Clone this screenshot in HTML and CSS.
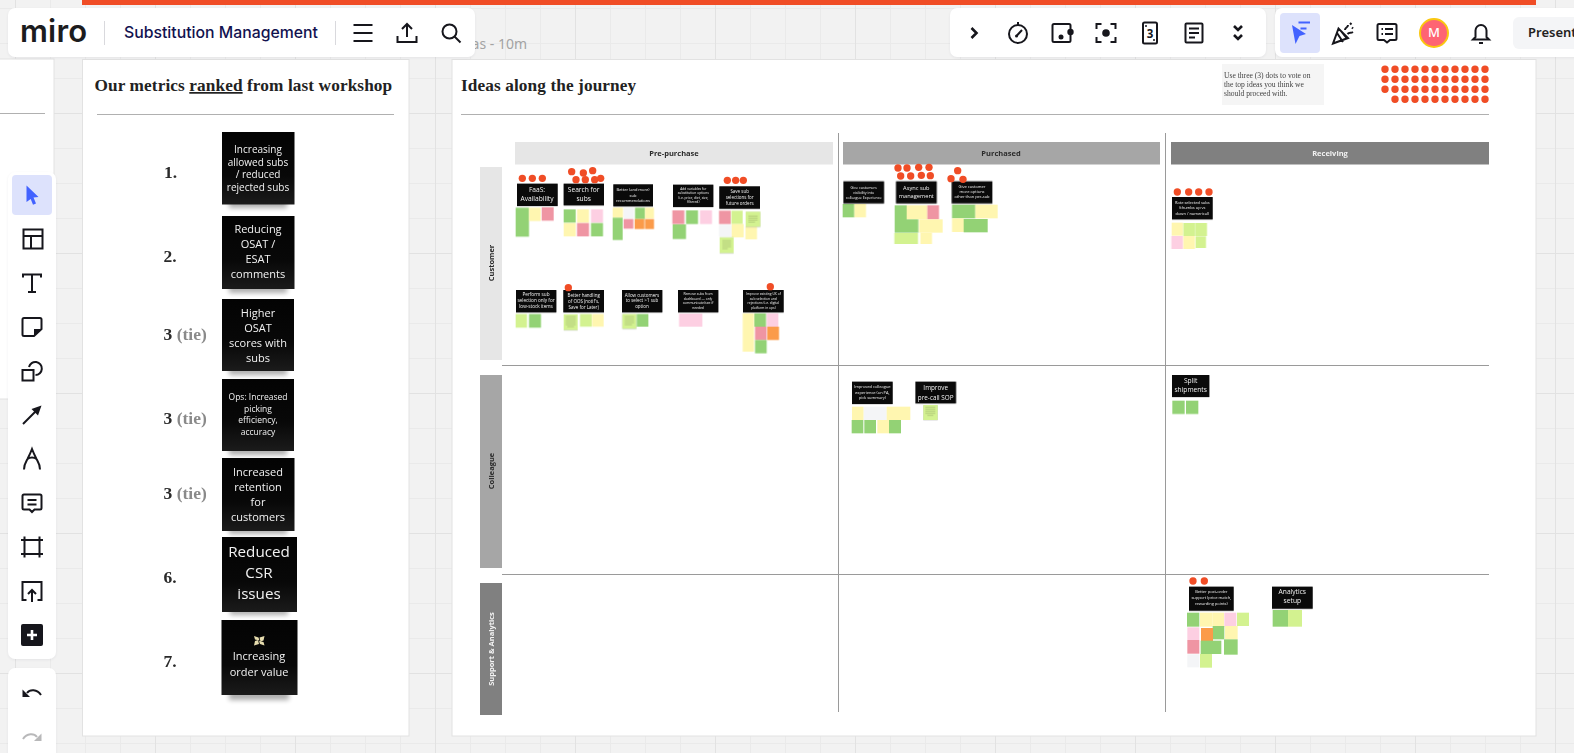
FILE: index.html
```html
<!DOCTYPE html>
<html lang="en">
<head>
<meta charset="utf-8">
<title>Substitution Management - Miro</title>
<link rel="stylesheet" href="styles.css">
</head>
<body>
<svg class="board" width="1574" height="753" viewBox="0 0 1574 753">
  <defs>
    <linearGradient id="noteg" x1="0" y1="0" x2="0" y2="1">
      <stop offset="0" stop-color="#030303"/>
      <stop offset=".6" stop-color="#080808"/>
      <stop offset="1" stop-color="#1b1b1b"/>
    </linearGradient>
  </defs>
  <text class="behind" x="527" y="48.500" text-anchor="end">Ideas - 10m</text>
  <rect class="banner" x="82" y="0" width="1454" height="5"/>
  <rect class="frame" x="-10" y="59" width="64" height="340"/>
  <rect class="frame" x="82.500" y="59.500" width="326.500" height="676.500"/>
  <rect class="frame" x="452" y="59.500" width="1084" height="676.500"/>
  <path class="rule" d="M0 113.500H45M97 114.500H394M461 114.500H1489"/>

  <text class="heading" x="94.500" y="91">Our metrics <tspan class="under">ranked</tspan> from last workshop</text>
  <text class="heading" x="461" y="91">Ideas along the journey</text>

  <!-- metrics column -->
  <g class="soft">
    <text class="rank" x="164" y="178">1.</text>
    <text class="rank" x="163.500" y="262">2.</text>
    <text class="rank" x="163.500" y="340">3 <tspan class="tie">(tie)</tspan></text>
    <text class="rank" x="163.500" y="424">3 <tspan class="tie">(tie)</tspan></text>
    <text class="rank" x="163.500" y="499">3 <tspan class="tie">(tie)</tspan></text>
    <text class="rank" x="163.500" y="583">6.</text>
    <text class="rank" x="163.500" y="667">7.</text>

    <rect class="nshadow" x="229" y="200" width="58" height="8"/>
    <rect class="nshadow" x="229" y="285" width="58" height="8"/>
    <rect class="nshadow" x="229" y="367" width="58" height="8"/>
    <rect class="nshadow" x="229" y="447" width="58" height="8"/>
    <rect class="nshadow" x="229" y="527" width="58" height="7"/>
    <rect class="nshadow" x="230" y="608" width="58" height="7"/>
    <rect class="nshadow" x="229" y="691" width="60" height="9"/>

    <rect fill="url(#noteg)" x="222" y="132" width="72.500" height="72.500"/>
    <rect fill="url(#noteg)" x="222" y="216" width="72.500" height="73"/>
    <rect fill="url(#noteg)" x="222" y="299" width="72" height="72"/>
    <rect fill="url(#noteg)" x="222" y="379" width="72" height="72"/>
    <rect fill="url(#noteg)" x="222" y="458" width="72.500" height="73"/>
    <rect fill="url(#noteg)" x="222" y="537" width="75" height="75"/>
    <rect fill="url(#noteg)" x="221.500" y="620" width="76" height="75"/>

    <text class="nw s10" x="258" y="153">Increasing<tspan x="258" dy="12.7">allowed subs</tspan><tspan x="258" dy="12.7">/ reduced</tspan><tspan x="258" dy="12.7">rejected subs</tspan></text>
    <text class="nw s11" x="258" y="233">Reducing<tspan x="258" dy="15">OSAT /</tspan><tspan x="258" dy="15">ESAT</tspan><tspan x="258" dy="15">comments</tspan></text>
    <text class="nw s11" x="258" y="316.500">Higher<tspan x="258" dy="15.2">OSAT</tspan><tspan x="258" dy="15.2">scores with</tspan><tspan x="258" dy="15.2">subs</tspan></text>
    <text class="nw s85" x="258" y="400">Ops: Increased<tspan x="258" dy="11.7">picking</tspan><tspan x="258" dy="11.7">efficiency,</tspan><tspan x="258" dy="11.7">accuracy</tspan></text>
    <text class="nw s11" x="258" y="476">Increased<tspan x="258" dy="15">retention</tspan><tspan x="258" dy="15">for</tspan><tspan x="258" dy="15">customers</tspan></text>
    <text class="nw s15" x="259" y="557">Reduced<tspan x="259" dy="20.8">CSR</tspan><tspan x="259" dy="20.8">issues</tspan></text>
    <path class="flower" d="M254 636l4.500 1.500 1 3-4.500-1zM264.500 636l-1 4.500-3 1-1-4zM264.500 645.500l-4.500-1.500-1-3 4.500 1zM254 645.500l1-4.500 3-1 1 4z"/>
    <text class="nw s11" x="259" y="660">Increasing<tspan x="259" dy="15.500">order value</tspan></text>
  </g>

  <!-- voting instructions -->
  <rect class="infobox" x="1222" y="64" width="102" height="41"/>
  <g class="soft">
    <text class="info" x="1224" y="78">Use three (3) dots to vote on</text>
    <text class="info" x="1224" y="86.700">the top ideas you think we</text>
    <text class="info" x="1224" y="95.500">should proceed with.</text>
    <path class="dotline" d="M1385 69.300H1486M1385 79.300H1486M1385 89.300H1486M1395 99.300H1486"/>
  </g>

  <!-- matrix -->
  <g class="soft">
    <rect class="g1" x="515" y="142" width="318" height="22.500"/>
    <rect class="g2" x="843" y="142" width="317" height="22.500"/>
    <rect class="g3" x="1171" y="142" width="318" height="22.500"/>
    <rect class="g1" x="480" y="167" width="22" height="193"/>
    <rect class="g2" x="480" y="375" width="22" height="193"/>
    <rect class="g3" x="480" y="583" width="22" height="132"/>
    <path class="axis" d="M838.500 133V712M1165.500 133V712M502 365.500H1489M502 574.500H1489"/>
    <text class="lab" x="674" y="156">Pre-purchase</text>
    <text class="lab" x="1001" y="156">Purchased</text>
    <text class="lab lt" x="1330" y="156">Receiving</text>
    <text class="lab" transform="translate(494 263) rotate(-90)">Customer</text>
    <text class="lab" transform="translate(494 471) rotate(-90)">Colleague</text>
    <text class="lab lt" transform="translate(494 649) rotate(-90)">Support &amp; Analytics</text>
  </g>

  <!-- Customer / pre-purchase -->
  <g class="soft" transform="translate(480 130) scale(.33333)">
    <rect class="gr" x="107" y="233" width="40" height="87"/>
    <rect class="ye" x="147" y="233" width="35" height="40"/>
    <rect class="re" x="185" y="232" width="36" height="40"/>
    <rect class="gr" x="251" y="238" width="36" height="40"/>
    <rect class="ye" x="291" y="238" width="36" height="40"/>
    <rect class="pi" x="333" y="238" width="36" height="40"/>
    <rect class="ye" x="251" y="279" width="36" height="40"/>
    <rect class="re" x="291" y="279" width="36" height="40"/>
    <rect class="gr" x="333" y="279" width="36" height="40"/>
    <rect class="ye" x="398" y="233" width="31" height="30"/>
    <rect class="wh" x="431" y="233" width="30" height="32"/>
    <rect class="gr" x="465" y="233" width="30" height="34"/>
    <rect class="ye" x="495" y="233" width="27" height="32"/>
    <rect class="gr" x="398" y="263" width="30" height="67"/>
    <rect class="re" x="431" y="267" width="29" height="29"/>
    <rect class="or" x="464" y="267" width="29" height="30"/>
    <rect class="or" x="495" y="267" width="27" height="30"/>
    <rect class="re" x="577" y="241" width="36" height="41"/>
    <rect class="gr" x="618" y="241" width="36" height="41"/>
    <rect class="pi" x="660" y="241" width="36" height="41"/>
    <rect class="gr" x="578" y="283" width="40" height="44"/>
    <rect class="re" x="717" y="242" width="35" height="40"/>
    <rect class="li" x="754" y="242" width="34" height="40"/>
    <rect class="ye" x="755" y="282" width="36" height="40"/>
    <rect class="wh" x="717" y="284" width="37" height="36"/>
    <rect class="ye" x="796" y="290" width="35" height="38"/>
    <rect class="li tiny" x="797" y="245" width="44" height="45"/>
    <rect class="li tiny" x="719" y="322" width="42" height="47"/>
    <rect class="li" x="107" y="552" width="34" height="41"/>
    <rect class="gr" x="147" y="552" width="36" height="41"/>
    <rect class="li tiny" x="251" y="553" width="42" height="47"/>
    <rect class="li" x="300" y="552" width="35" height="38"/>
    <rect class="ye" x="336" y="552" width="35" height="38"/>
    <rect class="li tiny" x="427" y="552" width="42" height="44"/>
    <rect class="gr" x="470" y="552" width="35" height="38"/>
    <rect class="pi" x="597" y="551" width="70" height="39"/>
    <rect class="ye" x="788" y="550" width="34" height="115"/>
    <rect class="gr" x="823" y="550" width="35" height="40"/>
    <rect class="pi" x="860" y="550" width="35" height="40"/>
    <rect class="re" x="825" y="590" width="35" height="40"/>
    <rect class="or" x="862" y="590" width="35" height="40"/>
    <rect class="gr" x="825" y="630" width="35" height="40"/>
    <path class="mini" d="M805 258h28M805 264h28M805 270h28M805 276h20M727 332h26M727 338h26M727 344h26M727 350h26M727 356h16M257 560h30M257 566h30M257 572h30M257 578h30M257 584h30M262 590h20M434 560h28M434 566h28M434 572h28M434 578h28M434 584h22"/>

    <rect class="note" x="111" y="161" width="122" height="67"/>
    <rect class="note" x="251" y="161" width="121" height="65"/>
    <rect class="note" x="400" y="163" width="119" height="66"/>
    <rect class="note" x="579" y="164" width="121" height="67"/>
    <rect class="note" x="718" y="169" width="122" height="67"/>
    <rect class="note" x="108" y="480" width="121" height="67"/>
    <rect class="note" x="250" y="480" width="122" height="67"/>
    <rect class="note" x="426" y="480" width="121" height="67"/>
    <rect class="note" x="594" y="480" width="121" height="67"/>
    <rect class="note" x="789" y="480" width="122" height="67"/>

    <text class="nw z20" x="171" y="185">FaaS:<tspan x="171" dy="28">Availability</tspan></text>
    <text class="nw z20" x="311" y="186">Search for<tspan x="311" dy="27">subs</tspan></text>
    <text class="nw z12" x="459" y="184">Better (and more)<tspan x="459" dy="16.500">sub</tspan><tspan x="459" dy="16.500">recommendations</tspan></text>
    <text class="nw z10" x="640" y="180">Add variables for<tspan x="640" dy="13.500">substitution options</tspan><tspan x="640" dy="13.500">(i.e. price, diet, size,</tspan><tspan x="640" dy="13.500">filtered)</tspan></text>
    <text class="nw z13" x="779" y="188">Save sub<tspan x="779" dy="18">selections for</tspan><tspan x="779" dy="18">future orders</tspan></text>
    <text class="nw z14" x="168" y="497">Perform sub<tspan x="168" dy="19">selection only for</tspan><tspan x="168" dy="19">low-stock items</tspan></text>
    <text class="nw z13" x="311" y="500">Better handling<tspan x="311" dy="18">of OOS (notif's,</tspan><tspan x="311" dy="18">Save for Later)</tspan></text>
    <text class="nw z13" x="486" y="500">Allow customers<tspan x="486" dy="17">to select &gt;1 sub</tspan><tspan x="486" dy="17">option</tspan></text>
    <text class="nw z10" x="654" y="495">Remove subs from<tspan x="654" dy="14">dashboard — only</tspan><tspan x="654" dy="14">communicate/see if</tspan><tspan x="654" dy="14">needed</tspan></text>
    <text class="nw z10" x="850" y="495">Improve existing UX of<tspan x="850" dy="14">sub selection and</tspan><tspan x="850" dy="14">rejections (i.e. digital</tspan><tspan x="850" dy="14">platform in ops)</tspan></text>

    <circle class="dot" cx="127" cy="145" r="11"/><circle class="dot" cx="157" cy="145" r="11"/><circle class="dot" cx="187" cy="145" r="11"/>
    <circle class="dot" cx="275" cy="125" r="11"/><circle class="dot" cx="310" cy="129" r="11"/><circle class="dot" cx="338" cy="122" r="11"/><circle class="dot" cx="288" cy="149" r="11"/><circle class="dot" cx="316" cy="149" r="11"/><circle class="dot" cx="344" cy="149" r="11"/><circle class="dot" cx="362" cy="145" r="11"/>
    <circle class="dot" cx="742" cy="151" r="11"/><circle class="dot" cx="767" cy="151" r="11"/><circle class="dot" cx="790" cy="151" r="11"/>
    <circle class="dot" cx="265" cy="473" r="11"/><circle class="dot" cx="871" cy="470" r="11"/>
  </g>

  <!-- Customer / purchased + receiving -->
  <g class="soft" transform="translate(830 130) scale(.33333)">
    <rect class="gr" x="38" y="222" width="35" height="40"/>
    <rect class="ye" x="73" y="222" width="35" height="40"/>
    <rect class="gr" x="194" y="226" width="36" height="82"/>
    <rect class="ye" x="230" y="226" width="62" height="42"/>
    <rect class="re" x="292" y="226" width="35" height="42"/>
    <rect class="gr" x="230" y="268" width="35" height="40"/>
    <rect class="ye" x="267" y="268" width="71" height="40"/>
    <rect class="li" x="193" y="309" width="71" height="33"/>
    <rect class="ye" x="271" y="308" width="35" height="34"/>
    <rect class="gr" x="366" y="224" width="70" height="41"/>
    <rect class="ye" x="436" y="224" width="67" height="41"/>
    <rect class="ye" x="366" y="265" width="35" height="41"/>
    <rect class="gr" x="401" y="267" width="72" height="40"/>
    <rect class="ye" x="1025" y="278" width="34" height="39"/>
    <rect class="li" x="1060" y="279" width="36" height="39"/>
    <rect class="li" x="1097" y="279" width="34" height="39"/>
    <rect class="pi" x="1024" y="318" width="35" height="39"/>
    <rect class="ye" x="1060" y="318" width="35" height="39"/>
    <rect class="li" x="1097" y="319" width="31" height="35"/>

    <rect class="note" x="40" y="154" width="122" height="66"/>
    <rect class="note" x="198" y="154" width="122" height="66"/>
    <rect class="note" x="365" y="154" width="122" height="66"/>
    <rect class="note" x="1026" y="201" width="122" height="67"/>

    <text class="nw z11" x="101" y="177">Give customers<tspan x="101" dy="15">visibility into</tspan><tspan x="101" dy="15">colleague Experience</tspan></text>
    <text class="nw z17" x="259" y="181">Async sub<tspan x="259" dy="23">management</tspan></text>
    <text class="nw z12" x="426" y="173">Give customer<tspan x="426" dy="16">more options</tspan><tspan x="426" dy="16">other than per-sub</tspan></text>
    <text class="nw z12" x="1087" y="221">Rate selected subs<tspan x="1087" dy="16.500">(thumbs up vs</tspan><tspan x="1087" dy="16.500">down / numerical)</tspan></text>

    <circle class="dot" cx="204" cy="114" r="11"/><circle class="dot" cx="231" cy="114" r="11"/><circle class="dot" cx="266" cy="112" r="11"/><circle class="dot" cx="297" cy="112" r="11"/><circle class="dot" cx="212" cy="138" r="11"/><circle class="dot" cx="242" cy="138" r="11"/><circle class="dot" cx="274" cy="136" r="11"/><circle class="dot" cx="301" cy="137" r="11"/>
    <circle class="dot" cx="383" cy="122" r="11"/><circle class="dot" cx="363" cy="146" r="11"/><circle class="dot" cx="399" cy="148" r="11"/>
    <circle class="dot" cx="1042" cy="186" r="11"/><circle class="dot" cx="1076" cy="186" r="11"/><circle class="dot" cx="1106" cy="186" r="11"/><circle class="dot" cx="1137" cy="186" r="11"/>
  </g>

  <!-- Colleague row -->
  <g class="soft" transform="translate(840 370) scale(.33333)">
    <rect class="ye" x="36" y="110" width="35" height="40"/>
    <rect class="wh" x="71" y="110" width="69" height="40"/>
    <rect class="ye" x="140" y="110" width="71" height="40"/>
    <rect class="gr" x="35" y="150" width="35" height="40"/>
    <rect class="gr" x="73" y="150" width="35" height="40"/>
    <rect class="ye" x="112" y="150" width="35" height="40"/>
    <rect class="gr" x="147" y="150" width="36" height="40"/>
    <rect class="li tiny" x="250" y="105" width="43" height="45"/>
    <path class="mini" d="M256 112h30M256 118h30M256 124h30M256 130h30M262 136h18"/>
    <rect class="gr" x="997" y="92" width="37" height="40"/>
    <rect class="gr" x="1038" y="92" width="37" height="40"/>
    <rect class="note" x="36" y="35" width="122" height="67"/>
    <rect class="note" x="226" y="35" width="122" height="65"/>
    <rect class="note" x="996" y="15" width="112" height="66"/>
    <text class="nw z12" x="97" y="55">Improved colleague<tspan x="97" dy="16">experience (on PA,</tspan><tspan x="97" dy="17">pick summary)</tspan></text>
    <text class="nw z19" x="287" y="61">Improve<tspan x="287" dy="30">pre-call SOP</tspan></text>
    <text class="nw z20" x="1052" y="38">Split<tspan x="1052" dy="28">shipments</tspan></text>
  </g>

  <!-- Support row -->
  <g class="soft" transform="translate(1160 570) scale(.33333)">
    <rect class="gr" x="81" y="128" width="37" height="42"/>
    <rect class="ye" x="120" y="128" width="37" height="42"/>
    <rect class="ye" x="157" y="128" width="35" height="42"/>
    <rect class="pi" x="193" y="128" width="36" height="42"/>
    <rect class="li" x="231" y="128" width="36" height="40"/>
    <rect class="pi" x="82" y="172" width="36" height="38"/>
    <rect class="gr" x="158" y="168" width="35" height="40"/>
    <rect class="or" x="123" y="174" width="36" height="40"/>
    <rect class="ye" x="195" y="168" width="38" height="40"/>
    <rect class="re" x="82" y="210" width="36" height="41"/>
    <rect class="gr" x="122" y="212" width="62" height="40"/>
    <rect class="gr" x="192" y="208" width="41" height="46"/>
    <rect class="wh" x="82" y="253" width="36" height="39"/>
    <rect class="li" x="120" y="252" width="36" height="41"/>
    <rect class="gr" x="338" y="120" width="46" height="50"/>
    <rect class="li" x="384" y="120" width="42" height="50"/>
    <rect class="note" x="87" y="50" width="134" height="72"/>
    <rect class="note" x="336" y="50" width="122" height="66"/>
    <text class="nw z12" x="154" y="70">Better post-order<tspan x="154" dy="18">support (price match,</tspan><tspan x="154" dy="18">rewarding points)</tspan></text>
    <text class="nw z20" x="397" y="73">Analytics<tspan x="397" dy="27">setup</tspan></text>
    <circle class="dot" cx="99" cy="33" r="11"/><circle class="dot" cx="133" cy="33" r="11"/>
  </g>
</svg>

<header class="panel topleft">
  <span class="logo">miro</span>
  <span class="divider divider-a"></span>
  <span class="board-title">Substitution Management</span>
  <span class="divider divider-b"></span>
  <span class="tool"><svg class="ico" viewBox="0 0 24 24"><path d="M2.500 4h19M2.500 12h19M2.500 20h19"/></svg></span>
  <span class="tool"><svg class="ico" viewBox="0 0 24 24"><path d="M12 16V3M7 8l5-5 5 5M2.500 15v6h19v-6"/></svg></span>
  <span class="tool"><svg class="ico" viewBox="0 0 24 24"><circle cx="10.500" cy="10.500" r="7"/><path d="M15.500 15.500L21.500 21.500"/></svg></span>
</header>

<nav class="panel topmid">
  <span class="tool"><svg class="ico" viewBox="0 0 24 24"><path class="thick" d="M9.500 7l5 5-5 5"/></svg></span>
  <span class="tool"><svg class="ico" viewBox="0 0 24 24"><circle cx="12" cy="13" r="9"/><path d="M12 1v3M10.500 15L16 9"/><circle class="solid" cx="10.500" cy="15" r="1.500"/></svg></span>
  <span class="tool"><svg class="ico" viewBox="0 0 24 24"><rect x="2.500" y="3" width="18" height="18" rx="1.500"/><circle class="solid" cx="11" cy="16" r="2.500"/><circle class="solid" cx="20.500" cy="11" r="3.200"/></svg></span>
  <span class="tool"><svg class="ico" viewBox="0 0 24 24"><path d="M2.500 8V3h5M16.500 3h5v5M21.500 16v5h-5M7.500 21h-5v-5"/><circle class="solid" cx="12" cy="12" r="3.800"/></svg></span>
  <span class="tool"><svg class="ico" viewBox="0 0 24 24"><rect x="5" y="1.500" width="14" height="21" rx="1.500"/><text class="card3" x="12" y="16.500">3</text><circle class="solid" cx="8" cy="5" r="1"/><circle class="solid" cx="16" cy="19" r="1"/></svg></span>
  <span class="tool"><svg class="ico" viewBox="0 0 24 24"><rect x="3.500" y="2.500" width="17" height="19" rx="1"/><path d="M7 7.500h10M7 12h10M7 16.500h6"/></svg></span>
  <span class="tool"><svg class="ico" viewBox="0 0 24 24"><path class="thick" d="M8 5l4 4 4-4M8 14l4 4 4-4"/></svg></span>
</nav>

<nav class="panel topright">
  <span class="tool tool-on"><svg class="ico" viewBox="0 0 24 24"><path class="blue" d="M4 4L18 13l-6.500 2L7.500 23z"/><path class="blueline" d="M10.500 1.500h11.500M12.500 7.500h6"/></svg></span>
  <span class="tool"><svg class="ico" viewBox="0 0 24 24"><path d="M2 22.500l5.500-15 9.500 9.500zM6 12l6 9M9.500 9.500l6 7.500M14 9c0-3 3-2 3-5M16.500 13c2-2 3-.5 5.500-2M19 2l1.500 1.500M21 6.500l1 1"/></svg></span>
  <span class="tool"><svg class="ico" viewBox="0 0 24 24"><path d="M4 3h16a1.500 1.500 0 0 1 1.500 1.500v13a1.500 1.500 0 0 1-1.500 1.500h-5l-3 2.500L9 19H4a1.500 1.500 0 0 1-1.500-1.500v-13A1.500 1.500 0 0 1 4 3zM6.500 8h1.500M10 8h8M6.500 13h1.500M10 13h8"/></svg></span>
  <span class="avatar">M</span>
  <span class="tool tool-bell"><svg class="ico" viewBox="0 0 24 24"><path d="M6.500 16V9.500a5.500 5.500 0 0 1 11 0V16l2.500 2.500H4zM10 22h4"/></svg></span>
  <span class="present">Present</span>
</nav>

<aside class="panel sidebar">
  <span class="tool tool-on"><svg class="ico" viewBox="0 0 24 24"><path class="blue" d="M6.500 2.500L18.500 14l-5 .5 2.500 6-3 1.200-2.300-5.800L6.500 19z"/></svg></span>
  <span class="tool"><svg class="ico" viewBox="0 0 24 24"><rect x="2.500" y="2.500" width="19" height="19"/><path d="M2.500 9h19M10 9v12.500"/></svg></span>
  <span class="tool"><svg class="ico" viewBox="0 0 24 24"><path d="M3 6.500V3.500h18v3M12 3.500V21M8 21h8"/></svg></span>
  <span class="tool"><svg class="ico" viewBox="0 0 24 24"><path d="M4 3h16a1.500 1.500 0 0 1 1.500 1.500V14L14 21H4a1.500 1.500 0 0 1-1.500-1.500v-15A1.500 1.500 0 0 1 4 3z"/><path class="solid" d="M21.500 14H14v7z"/></svg></span>
  <span class="tool"><svg class="ico" viewBox="0 0 24 24"><rect x="2.500" y="11" width="11" height="10.500"/><path d="M9 8a6.500 6.500 0 1 1 6.500 8"/></svg></span>
  <span class="tool"><svg class="ico" viewBox="0 0 24 24"><path d="M3 21L17 7"/><path class="solid" d="M21.500 2.500L11.500 6l6.500 6.500z"/></svg></span>
  <span class="tool"><svg class="ico" viewBox="0 0 24 24"><path d="M4 22.500c0-5 1.500-7 3.500-10.500C9 9 10.500 6 12 2c1.500 4 3 7 4.500 10C18.500 15.500 20 17.500 20 22.500M7.500 12c2.500-2 6.500-2 9 0"/></svg></span>
  <span class="tool"><svg class="ico" viewBox="0 0 24 24"><path d="M4 3.500h16a1.500 1.500 0 0 1 1.500 1.500v12a1.500 1.500 0 0 1-1.500 1.500h-5.500l-2.500 2.500-2.500-2.500H4A1.500 1.500 0 0 1 2.500 17V5A1.500 1.500 0 0 1 4 3.500zM7.500 9h9M7.500 13.500h9"/></svg></span>
  <span class="tool"><svg class="ico" viewBox="0 0 24 24"><path d="M4.500 1.500v21M19.500 1.500v21M1 5h22M1 19h22"/></svg></span>
  <span class="tool"><svg class="ico" viewBox="0 0 24 24"><path d="M6.500 21H2.500V3h19v18h-4M12 23V11M8 15l4-4 4 4"/></svg></span>
  <span class="tool"><svg class="ico" viewBox="0 0 24 24"><rect class="solid" x="1" y="1" width="22" height="22" rx="2"/><path class="plus" d="M12 7v10M7 12h10"/></svg></span>
</aside>

<aside class="panel history">
  <span class="tool"><svg class="ico" viewBox="0 0 24 24"><path d="M7 12c3-4 10-4 14 2"/><path class="solid" d="M2.500 8.500v7.500h7.500z"/></svg></span>
  <span class="tool tool-off"><svg class="ico" viewBox="0 0 24 24"><path d="M17 12c-3-4-10-4-14 2"/><path class="solid" d="M21.500 8.500v7.500H14z"/></svg></span>
</aside>
</body>
</html>
```

FILE: styles.css
```css
html, body {
  margin: 0;
  height: 100%;
  overflow: hidden;
}

body {
  position: relative;
  width: 1574px;
  height: 753px;
  background-color: #f2f2f2;
  background-image:
    linear-gradient(#e2e2e2 1px, transparent 1px),
    linear-gradient(90deg, #e2e2e2 1px, transparent 1px),
    linear-gradient(#eaeaea 1px, transparent 1px),
    linear-gradient(90deg, #eaeaea 1px, transparent 1px);
  background-size: 140px 140px, 140px 140px, 35px 35px, 35px 35px;
  background-position: 0 113px, 15px 0, 0 8px, 15px 0;
  font-family: "Noto Sans", "Open Sans", sans-serif;
}

/* ---------- free canvas ---------- */
.board {
  position: absolute;
  left: 0;
  top: 0;
  display: block;
}

.behind {
  font: 14px "Noto Sans", sans-serif;
  fill: #a3a3a3;
}

.banner { fill: #f04d26; }
.frame { fill: #fff; stroke: #e2e2e2; stroke-width: 1; }
.rule { stroke: #b0b0b0; stroke-width: 1; fill: none; }
.soft { filter: blur(.35px); }

.heading {
  font: 700 17.25px "Liberation Serif", serif;
  fill: #222;
  letter-spacing: .1px;
}
.under { text-decoration: underline; }

.rank {
  font: 700 17.5px "Liberation Serif", serif;
  fill: #2a2a2a;
}
.tie { fill: #8a8a8a; }

.nshadow {
  fill: #000;
  opacity: .32;
  filter: blur(2.5px);
}
.note { fill: #0a0a0a; filter: drop-shadow(0 1px 1px rgba(0, 0, 0, .4)); }

.nw {
  font-family: "Open Sans", "Noto Sans", sans-serif;
  fill: #f2f2f2;
  text-anchor: middle;
}
.s85 { font-size: 8.5px; }
.s10 { font-size: 10px; }
.s11 { font-size: 11px; }
.s15 { font-size: 15.2px; }
.z10 { font-size: 10px; }
.z11 { font-size: 11px; }
.z12 { font-size: 12px; }
.z13 { font-size: 13.5px; }
.z14 { font-size: 14px; }
.z17 { font-size: 17px; }
.z19 { font-size: 19px; }
.z20 { font-size: 20px; }

.flower { fill: #e6dcae; }

.infobox { fill: #f5f5f5; }
.info {
  font: 7.6px "Liberation Serif", serif;
  fill: #444;
}
.dotline {
  fill: none;
  stroke: #f04d26;
  stroke-width: 7.4;
  stroke-linecap: round;
  stroke-dasharray: 0 10;
}

.g1 { fill: #e6e6e6; }
.g2 { fill: #a6a6a6; }
.g3 { fill: #808080; }
.axis { stroke: #9a9a9a; stroke-width: 1; fill: none; }
.lab {
  font: 700 7.5px "Open Sans", "Noto Sans", sans-serif;
  fill: #2b2b2b;
  text-anchor: middle;
}
.lt { fill: #f2f2f2; }

.gr { fill: #93d275; }
.ye { fill: #fff6b0; }
.re { fill: #ef95a3; }
.pi { fill: #fdcfe2; }
.or { fill: #fb9b4a; }
.li { fill: #d3f290; }
.wh { fill: #f4f5f7; }
.tiny { filter: drop-shadow(0 1px 1px rgba(0, 0, 0, .25)); }
.mini { stroke: #a5ba70; stroke-width: 2; fill: none; }
.dot { fill: #f04d26; }

/* ---------- floating UI ---------- */
.panel {
  position: absolute;
  display: flex;
  background: #fff;
  border-radius: 7px;
  box-shadow: 0 1px 3px rgba(5, 0, 56, .06);
}

.topleft {
  left: 8px;
  top: 8px;
  width: 467px;
  height: 49px;
  align-items: center;
  padding-left: 12px;
  box-sizing: border-box;
}

.topmid {
  left: 950px;
  top: 8px;
  width: 316px;
  height: 49px;
  align-items: center;
  padding-left: 2px;
  box-sizing: border-box;
}

.topright {
  left: 1275px;
  top: 8px;
  width: 310px;
  height: 49px;
  align-items: center;
  padding-left: 5px;
  box-sizing: border-box;
  border-radius: 7px 0 0 7px;
}

.sidebar {
  left: 8px;
  top: 172px;
  width: 48px;
  height: 487px;
  box-sizing: border-box;
  flex-direction: column;
  align-items: center;
  gap: 4px;
  padding-top: 3px;
}

.history {
  left: 8px;
  top: 668px;
  width: 48px;
  height: 100px;
  box-sizing: border-box;
  flex-direction: column;
  align-items: center;
  gap: 4px;
  padding-top: 5px;
}

.logo {
  font: 600 31px/1 "Inter", "Lato", sans-serif;
  color: #1c1c1e;
  letter-spacing: .2px;
  width: 65px;
  margin-top: -4px;
  white-space: nowrap;
}

.divider {
  display: block;
  width: 1px;
  height: 24px;
  background: #d9d9dd;
}
.divider-a { margin: 0 19px; }
.divider-b { margin: 0 5px 0 15px; }

.board-title {
  font: 500 15.8px/1 "Inter", sans-serif;
  color: #12124f;
  width: 196px;
  white-space: nowrap;
}

.tool {
  flex: none;
  display: flex;
  align-items: center;
  justify-content: center;
  width: 44px;
  height: 40px;
}

.sidebar .tool, .history .tool { width: 40px; }

.tool-on {
  width: 40px;
  background: #dde2fc;
  border-radius: 4px;
}
.tool-on + .tool { margin-left: 1px; }
.tool-off { opacity: .3; }
.tool-bell { margin-left: 10px; }

.ico {
  width: 24px;
  height: 24px;
  fill: none;
  stroke: #16161c;
  stroke-width: 2;
  overflow: visible;
}
.ico .solid { fill: #16161c; stroke: none; }
.ico .thick { stroke-width: 2.6; }
.ico .blue { fill: #4262ff; stroke: none; }
.ico .blueline { stroke: #4262ff; stroke-width: 2; }
.ico .plus { stroke: #fff; stroke-width: 2.6; }
.card3 {
  font: 700 11.5px "Noto Sans", sans-serif;
  fill: #16161c;
  stroke: none;
  text-anchor: middle;
}

.avatar {
  flex: none;
  display: flex;
  align-items: center;
  justify-content: center;
  width: 26px;
  height: 26px;
  margin-left: 10px;
  border: 2px solid #fac710;
  border-radius: 50%;
  background: #fe6473;
  color: #fff;
  font: 500 13px/1 "Noto Sans", sans-serif;
}

.present {
  flex: none;
  display: flex;
  align-items: center;
  margin-left: 10px;
  height: 32px;
  width: 100px;
  padding-left: 15px;
  box-sizing: border-box;
  background: #f4f5f7;
  border-radius: 6px;
  color: #222;
  font: 600 13px/1 "Noto Sans", sans-serif;
}
```
